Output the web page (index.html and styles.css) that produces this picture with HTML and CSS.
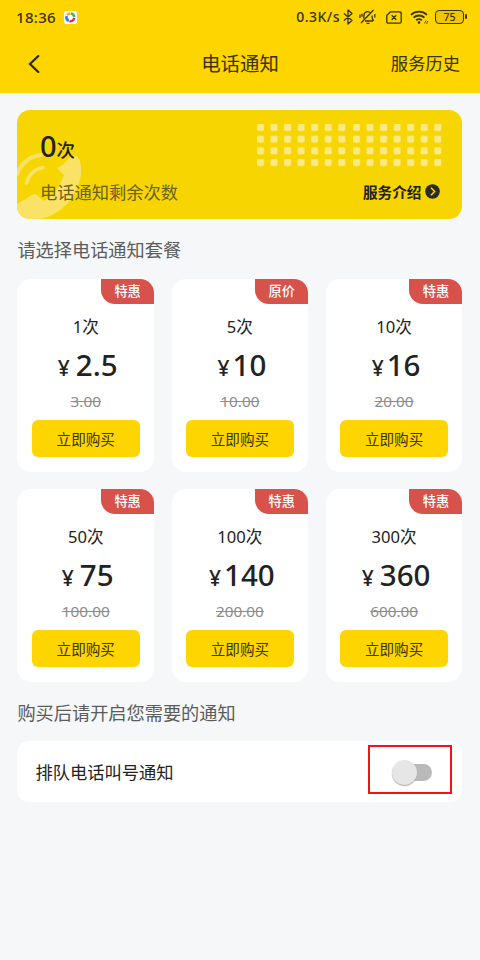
FILE: index.html
```html
<!DOCTYPE html>
<html lang="zh-CN">
<head>
<meta charset="utf-8">
<title>电话通知</title>
<link rel="stylesheet" href="styles.css">
</head>
<body>
<header class="top">
  <div class="status">
    <span class="time">18:36</span>
    <svg class="app" width="13" height="13" viewBox="0 0 13 13"><rect width="13" height="13" rx="2.5" fill="#fff"/><g fill="none" stroke-width="2.4"><path d="M3 4.200A4.200 4.200 0 0 1 6.500 2.500" stroke="#f5a623"/><path d="M7 2.500A4.200 4.200 0 0 1 10.300 6" stroke="#35b56a"/><path d="M10.300 7A4.200 4.200 0 0 1 5.500 10.300" stroke="#e8264d"/><path d="M4.800 10A4.200 4.200 0 0 1 2.600 5" stroke="#2a7de1"/></g></svg>
    <span class="speed">0.3K/s</span>
    <svg class="bt" width="10" height="16" viewBox="0 0 10 16"><path d="M1 4.500l8 7L5 15V1l4 3.500-8 7"/></svg>
    <svg class="bell" width="17" height="16" viewBox="0 0 17 16"><path d="M6 12h8M4.500 9.500Q5 8.500 5 6.500a3.700 3.700 0 0 1 6.500-2.500M13 6.500q0 3.500 1.500 5.500M7.500 14.300h3M14.500 1L2 14M1 5.500v3.500M3 4.800v3M15.800 5v3.500"/></svg>
    <svg class="sim" width="16" height="13" viewBox="0 0 16 13"><path d="M4.500.8h9.200q1.500 0 1.500 1.500v8.400q0 1.500-1.500 1.500H2.300q-1.500 0-1.500-1.500V4.500zM5.700 4.200l4.600 4.600M10.300 4.200L5.700 8.800"/></svg>
    <svg class="wifi" width="19" height="15" viewBox="0 0 19 15"><path d="M1 4.800a11.500 11.500 0 0 1 16 0M3.600 7.600a8 8 0 0 1 10.800 0M6.200 10.300a4.400 4.400 0 0 1 5.600 0" stroke-width="1.800"/><circle cx="9" cy="12.500" r="1.300" fill="#3a3208" stroke="none"/><path d="M14.500 13.500l1.500-3M16.500 14l1.300-3" stroke-width=".8"/></svg>
    <span class="battery">75</span>
  </div>
  <nav class="nav">
    <svg class="back" width="12" height="18" viewBox="0 0 12 18"><path d="M10.300 1L2 9l8.300 8"/></svg>
    <h1>电话通知</h1>
    <span class="history">服务历史</span>
  </nav>
</header>
<main>
  <section class="balance">
    <svg class="phone" width="66" height="68" viewBox="0 0 66 68"><path d="M40 17q8-4 11-9q5-6 10-2q4 6 3 18Q61 41 49 54Q37 66 22 68H0V53L15 44q3-2 5 0l7 6q13-7 20-26z" fill="#f9e265"/><g fill="none" stroke="#f9e265" stroke-linecap="round"><path d="M0 23Q7 6 24 4" stroke-width="4"/><path d="M9.500 32Q13 19 26 16.500" stroke-width="3.500"/></g></svg>
    <svg class="dots" width="186" height="43" viewBox="0 0 186 43"><defs><pattern id="grid" width="13.550" height="11.670" patternUnits="userSpaceOnUse"><rect width="7" height="7" rx="1.300" fill="#fbe886"/></pattern></defs><rect width="95" height="43" fill="url(#grid)"/><rect width="90" height="43" fill="url(#grid)" transform="translate(96)"/></svg>
    <div class="left"><strong>0</strong><b>次</b></div>
    <div class="row"><span class="remain">电话通知剩余次数</span><span class="intro">服务介绍</span>
      <svg width="15" height="15" viewBox="0 0 15 15"><circle cx="7.500" cy="7.500" r="7.300" fill="#2b2b2b"/><path d="M6 3.800l3.600 3.700L6 11.200" fill="none" stroke="#f7d500" stroke-width="1.600"/></svg></div>
  </section>
  <h2>请选择电话通知套餐</h2>
  <section class="plans">
    <article><i>特惠</i><div class="count">1次</div><div class="price"><small>¥</small>2.5</div><s>3.00</s><button>立即购买</button></article>
    <article><i>原价</i><div class="count">5次</div><div class="price one"><small>¥</small>10</div><s>10.00</s><button>立即购买</button></article>
    <article><i>特惠</i><div class="count">10次</div><div class="price one"><small>¥</small>16</div><s>20.00</s><button>立即购买</button></article>
    <article><i>特惠</i><div class="count">50次</div><div class="price"><small>¥</small>75</div><s>100.00</s><button>立即购买</button></article>
    <article><i>特惠</i><div class="count">100次</div><div class="price one"><small>¥</small>140</div><s>200.00</s><button>立即购买</button></article>
    <article><i>特惠</i><div class="count">300次</div><div class="price"><small>¥</small>360</div><s>600.00</s><button>立即购买</button></article>
  </section>
  <h2 class="second">购买后请开启您需要的通知</h2>
  <section class="setting"><span>排队电话叫号通知</span><div class="mark"><div class="switch"></div></div></section>
</main>
</body>
</html>
```
FILE: styles.css
```css
* { box-sizing: border-box; }
body { margin: 0; height: 960px; background: #f5f7f8; color: #222; font-family: "Noto Sans", "Noto Sans CJK SC", sans-serif; overflow: hidden; }
svg { flex: none; display: block; }
.top { height: 92.5px; background: #ffd500; color: #3a3208; }
.status { height: 34px; padding: 0 13px 0 16px; display: flex; align-items: center; font-size: 15px; font-weight: 500; line-height: 34px; }
.status svg:not(.app) { fill: none; stroke: #3a3208; stroke-width: 1.3; stroke-linejoin: round; }
.time { width: 48px; letter-spacing: .3px; }
.speed { margin-left: auto; font-size: 14px; font-weight: 500; letter-spacing: .5px; }
.bt { margin-left: 3px; }
.bell { margin-left: 6px; }
.sim { margin-left: 10px; }
.wifi { margin-left: 8px; }
.battery { position: relative; width: 29px; height: 14px; margin: 0 3px 0 6px; border: 1.6px solid #3a3208; border-radius: 4px; background: #efc600; font-size: 10.5px; line-height: 12px; text-align: center; }
.battery::after { content: ""; position: absolute; right: -4px; top: 3px; width: 2px; height: 5px; border-radius: 1px; background: #3a3208; }
.nav { height: 59px; padding: 1px 20px 0 28px; display: grid; grid-template-columns: 72px 1fr 80px; align-items: center; }
.back { fill: none; stroke: #2c2608; stroke-width: 2.2; stroke-linecap: round; }
h1 { margin: 0; font-size: 19.4px; font-weight: 400; text-align: center; line-height: 28px; }
.history { font-size: 17.3px; line-height: 26px; text-align: right; white-space: nowrap; }
main { padding: 17px 17.6px 0 17.4px; }
.balance { position: relative; height: 109.5px; border-radius: 13px; background: #f7d500; overflow: hidden; padding: 18px 22px 0 22.5px; }
.phone { position: absolute; left: 0; bottom: 0; }
.dots { position: absolute; left: 239.5px; top: 14px; }
.left { position: relative; height: 36px; line-height: 36px; display: flex; align-items: baseline; }
.left strong { font-size: 29px; font-weight: 500; }
.left b { font-size: 18.5px; font-weight: 500; }
.row { position: relative; height: 30px; margin-top: 13px; display: flex; align-items: center; }
.remain { flex: 1; font-size: 17.3px; color: #6b6020; }
.intro { font-size: 14.6px; font-weight: 700; margin-right: 4px; }
h2 { margin: 17.5px 0 16.5px; height: 26px; line-height: 26px; font-size: 18.2px; font-weight: 400; color: #5c5c5c; }
.plans { display: grid; grid-template-columns: repeat(3, 1fr); gap: 17.5px; }
article { position: relative; height: 192.7px; padding: 35.5px 14.5px 0; border-radius: 14px; background: #fff; display: flex; flex-direction: column; align-items: center; }
article i { position: absolute; right: 0; top: 0; width: 53px; height: 24.5px; border-radius: 0 14px 0 14px; background: #d7524a; color: #fff; font-style: normal; font-weight: 500; font-size: 13.2px; line-height: 25px; text-align: center; }
.count { height: 24px; line-height: 24px; font-size: 16.6px; }
.price { height: 32px; margin-top: 10.5px; padding-left: 4px; line-height: 32px; font-size: 29.5px; font-weight: 500; }
.price small { font-size: 21px; margin-right: 6px; }
.price.one small { margin-right: 3px; }
s { height: 20px; margin-top: 10px; line-height: 20px; font-size: 15.3px; color: #8c8c8c; text-decoration-thickness: 1px; }
button { width: 100%; height: 37px; margin-top: 9px; padding: 0; border: 0; border-radius: 6px; background: #ffd500; color: #3a3208; font: 14.6px/37px "Noto Sans CJK SC", sans-serif; }
.second { margin: 18px 0 15.5px; }
.setting { height: 60.5px; padding: 0 10px 0 18px; border-radius: 12px; background: #fff; display: flex; justify-content: space-between; align-items: center; font-size: 17.3px; }
.mark { width: 84.5px; height: 49px; margin-top: -4px; border: 2px solid #f21414; padding: 16.5px 0 0 26.5px; }
.switch { position: relative; width: 36px; height: 17px; border-radius: 9px; background: #b9b9b9; }
.switch::before { content: ""; position: absolute; left: -4px; top: -4px; width: 25px; height: 25px; border-radius: 50%; background: #e6e6e6; box-shadow: 0 1px 1px #aaa; }
```
